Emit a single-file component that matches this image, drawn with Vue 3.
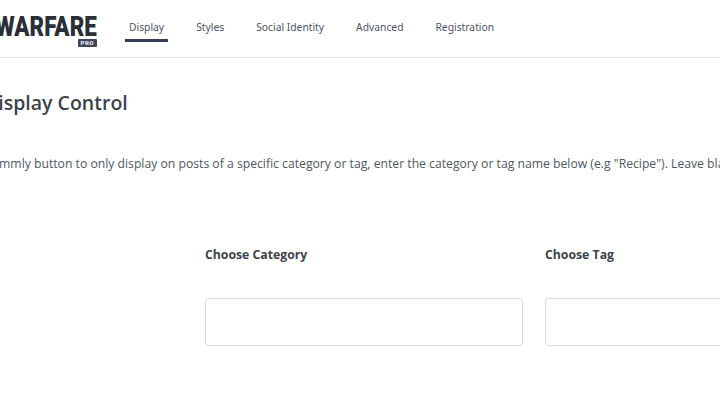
<script setup>
const tabs = ['Display', 'Styles', 'Social Identity', 'Advanced', 'Registration']
const fields = [
  { id: 'category', label: 'Choose Category' },
  { id: 'tag', label: 'Choose Tag' }
]
</script>

<template>
  <div class="page">
    <header class="topbar">
      <div class="logo">
        <span class="logo-word">WARFARE</span>
        <span class="logo-pro">PRO</span>
      </div>
      <nav class="tabs">
        <a v-for="(tab, i) in tabs" :key="tab" class="tab" :class="{ active: i === 0 }">{{ tab }}</a>
      </nav>
    </header>

    <main class="content">
      <h2 class="title">Display Control</h2>
      <p class="desc">If you want the Yummly button to only display on posts of a specific category or tag, enter the category or tag name below (e.g "Recipe"). Leave blank to display the button on all posts.</p>

      <div class="fields">
        <div v-for="field in fields" :key="field.id" class="field" :class="field.id">
          <label class="label">{{ field.label }}</label>
          <input class="input" type="text" />
        </div>
      </div>
    </main>
  </div>
</template>

<style>
html, body {
  margin: 0;
  overflow: hidden;
  background: #fff;
}
</style>

<style scoped>
.page {
  width: 720px;
  height: 405px;
  overflow: hidden;
  font-family: "Open Sans", "Noto Sans", sans-serif;
  color: #3c434a;
}

.topbar {
  display: flex;
  height: 57px;
  border-bottom: 1px solid #e6e6ea;
}

.logo {
  display: flex;
  flex-direction: column;
  align-items: flex-end;
  width: 97px;
  flex: none;
  padding-top: 16px;
  overflow: hidden;
}

.logo-word {
  font-family: "Roboto", sans-serif;
  font-weight: 900;
  font-size: 28px;
  line-height: 22px;
  color: #2b2e36;
  white-space: nowrap;
  transform: scaleX(0.8);
  transform-origin: right center;
}

.logo-pro {
  margin-top: 1px;
  padding: 0 3px;
  font-family: "Roboto", sans-serif;
  font-weight: 900;
  font-size: 6px;
  line-height: 8px;
  letter-spacing: 0.5px;
  color: #e8e9ee;
  background: #3d4459;
  border-radius: 1px;
}

.tabs {
  display: flex;
  align-items: flex-start;
  gap: 24px;
  margin-left: 28px;
}

.tab {
  padding: 20px 4px 5px;
  font-family: "Noto Sans", "Open Sans", sans-serif;
  font-size: 10.3px;
  line-height: 14px;
  color: #4d5363;
  white-space: nowrap;
  border-bottom: 3px solid transparent;
}

.tab.active {
  border-bottom-color: #363d58;
}

.content {
  padding-top: 31px;
}

.title {
  margin: 0 0 0 -16px;
  font-size: 19.5px;
  font-weight: 600;
  line-height: 27px;
  color: #3c434a;
  white-space: nowrap;
}

.desc {
  margin: 39px 0 0 -103px;
  font-size: 12.2px;
  line-height: 18px;
  color: #50575e;
  white-space: nowrap;
}

.fields {
  display: flex;
  gap: 22px;
  margin: 73px 0 0 205px;
}

.field {
  flex: none;
  width: 318px;
}

.label {
  display: block;
  font-size: 12.25px;
  font-weight: 700;
  line-height: 18px;
  color: #3c434a;
}

.input {
  display: block;
  box-sizing: border-box;
  width: 100%;
  height: 48px;
  margin-top: 34px;
  border: 1px solid #dcdcde;
  border-radius: 3px;
  background: #fff;
}
</style>
